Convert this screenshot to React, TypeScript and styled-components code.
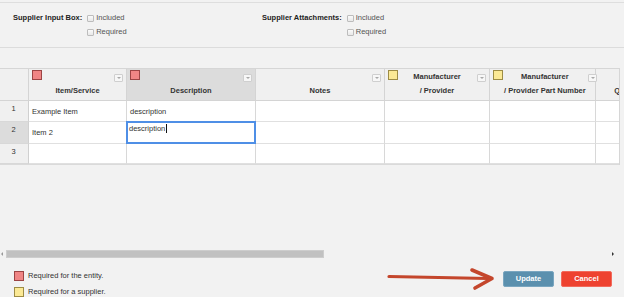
import React from "react";
import styled, { createGlobalStyle } from "styled-components";

const Global = createGlobalStyle`
  html, body { margin: 0; padding: 0; overflow: hidden; }
  body {
    background: #f2f2f2;
    font-family: "Liberation Sans", Arial, sans-serif;
    color: #333;
    width: 624px;
    height: 297px;
  }
`;

const Page = styled.div`
  position: relative;
  display: flex;
  flex-direction: column;
  padding-top: 2px;
  height: 295px;
  font-size: 7.5px;
`;

const Settings = styled.div`
  display: flex;
  border-top: 1px solid #dedede;
  border-bottom: 1px solid #dcdcdc;
  padding: 8px 0 8px 13px;
`;

const Group = styled.div<{ $w?: number }>`
  display: flex;
  width: ${(p) => (p.$w ? `${p.$w}px` : "auto")};
`;

const GroupLabel = styled.div`
  font-weight: bold;
  line-height: 14px;
  color: #222;
  margin-right: 5px;
`;

const Options = styled.div`
  display: flex;
  flex-direction: column;
`;

const Option = styled.label`
  display: flex;
  align-items: center;
  line-height: 14px;
  color: #555;
`;

const Check = styled.span`
  display: inline-block;
  box-sizing: border-box;
  width: 7px;
  height: 7px;
  margin-right: 2px;
  border: 1px solid #bcbcbc;
  border-radius: 1px;
  background: linear-gradient(#fafafa, #e8e8e8);
`;

const GridPanel = styled.div`
  margin-top: 20px;
  height: 192px;
  display: flex;
  flex-direction: column;
`;

const Viewport = styled.div`
  width: 619px;
  overflow: hidden;
  border-right: 1px solid #d6d6d6;
`;

const Grid = styled.div`
  display: grid;
  grid-template-columns: 29px 98px 129px 129px 105px 106px 68px;
  grid-template-rows: 32px 21px 22px 20px;
  width: 664px;
  border-top: 1px solid #d6d6d6;
  border-bottom: 1px solid #dadada;
`;

const Cell = styled.div`
  box-sizing: border-box;
  border-right: 1px solid #d8d8d8;
  border-bottom: 1px solid #e0e0e0;
  background: #fff;
  padding: 0 3px;
  display: flex;
  align-items: center;
  white-space: nowrap;
  overflow: hidden;
  color: #333;
`;

const EditCell = styled(Cell)`
  border: 2px solid #4f8fe6;
  align-items: flex-start;
  padding: 1px 1px 0;
  margin: -1px 0 0 -1px;
  width: calc(100% + 1px);
  height: calc(100% + 1px);
`;

const Caret = styled.span`
  display: inline-block;
  width: 1px;
  height: 9px;
  background: #111;
  margin-left: 1px;
  vertical-align: top;
`;

const RowNum = styled.div<{ $active?: boolean }>`
  box-sizing: border-box;
  border-right: 1px solid #d0d0d0;
  border-bottom: 1px solid #d8d8d8;
  background: ${(p) => (p.$active ? "#dcdcdc" : "#f0f0f0")};
  text-align: center;
  padding-top: 3px;
  padding-right: 1px;
  line-height: 10px;
  color: #333;
`;

const Head = styled.div<{ $active?: boolean }>`
  box-sizing: border-box;
  border-right: 1px solid #d4d4d4;
  border-bottom: 1px solid #d4d4d4;
  background: ${(p) => (p.$active ? "#dcdcdc" : "#f0f0f0")};
  display: grid;
  grid-template-columns: 14px 1fr 14px;
  grid-template-rows: 1fr;
  padding: 1px 0 2px 0;
`;

const Corner = styled.div`
  box-sizing: border-box;
  border-right: 1px solid #d4d4d4;
  border-bottom: 1px solid #d4d4d4;
  background: #f0f0f0;
`;

const Swatch = styled.span<{ $kind: "red" | "yellow" }>`
  display: block;
  box-sizing: border-box;
  width: 10px;
  height: 10px;
  margin-left: 3px;
  background: ${(p) => (p.$kind === "red" ? "#f08585" : "#fbe995")};
  border: 1px solid ${(p) => (p.$kind === "red" ? "#9c4444" : "#9d8c45")};
  align-self: start;
`;

const Spacer = styled.span``;

const HeadLabel = styled.div`
  align-self: end;
  text-align: center;
  font-weight: bold;
  line-height: 14px;
  color: #333;
  white-space: nowrap;
`;

const Filter = styled.span`
  position: relative;
  display: block;
  box-sizing: border-box;
  width: 9px;
  height: 8px;
  margin-top: 4px;
  justify-self: end;
  margin-right: 3px;
  border: 1px solid #cfcfcf;
  border-radius: 1px;
  background: #f7f7f7;
  align-self: start;
  &::after {
    content: "";
    position: absolute;
    left: 2px;
    top: 2px;
    border-left: 2px solid transparent;
    border-right: 2px solid transparent;
    border-top: 2px solid #a8a8a8;
  }
`;

const Scrollbar = styled.div`
  margin-top: auto;
  height: 8px;
  display: flex;
  align-items: center;
  position: relative;
`;

const ScrollArrow = styled.span<{ $dir: "left" | "right" }>`
  width: 0;
  height: 0;
  border-top: 2px solid transparent;
  border-bottom: 2px solid transparent;
  ${(p) =>
    p.$dir === "left"
      ? "border-right: 2px solid #999; margin-left: 1px;"
      : "border-left: 2px solid #333; margin-left: auto; margin-right: 10px;"}
`;

const Thumb = styled.span`
  box-sizing: border-box;
  width: 318px;
  height: 8px;
  margin-left: 3px;
  background: #c1c1c1;
  border: 1px solid #cdcdcd;
`;

const Footer = styled.div`
  display: flex;
  justify-content: space-between;
  align-items: flex-start;
  padding: 13px 12px 0 14px;
`;

const Legend = styled.div`
  display: flex;
  flex-direction: column;
  gap: 6px;
`;

const LegendItem = styled.div`
  display: flex;
  align-items: center;
  gap: 4px;
  line-height: 10px;
  color: #333;
`;

const LegendSwatch = styled(Swatch)`
  margin-left: 0;
`;

const Buttons = styled.div`
  display: flex;
  gap: 7px;
`;

const Button = styled.button<{ $variant: "primary" | "danger" }>`
  box-sizing: border-box;
  width: 51px;
  height: 16px;
  padding: 0;
  border-radius: 2px;
  border: 1px solid ${(p) => (p.$variant === "primary" ? "#7aa6c0" : "#f26a5c")};
  background: ${(p) => (p.$variant === "primary" ? "#5b90ae" : "#ee4230")};
  color: #fff;
  font-family: "Liberation Sans", Arial, sans-serif;
  font-size: 7.5px;
  font-weight: bold;
  line-height: 14px;
`;

const ArrowSvg = styled.svg`
  position: absolute;
  left: 380px;
  top: 264px;
`;

type Col = { label: React.ReactNode; swatch?: "red" | "yellow"; active?: boolean };

const cols: Col[] = [
  { label: "Item/Service", swatch: "red" },
  { label: "Description", swatch: "red", active: true },
  { label: "Notes" },
  { label: <>Manufacturer<br />/ Provider</>, swatch: "yellow" },
  { label: <>Manufacturer<br />/ Provider Part Number</>, swatch: "yellow" },
  { label: "Quantity" },
];

export default function App() {
  return (
    <>
      <Global />
      <Page>
        <Settings>
          <Group $w={249}>
            <GroupLabel>Supplier Input Box:</GroupLabel>
            <Options>
              <Option><Check />Included</Option>
              <Option><Check />Required</Option>
            </Options>
          </Group>
          <Group>
            <GroupLabel>Supplier Attachments:</GroupLabel>
            <Options>
              <Option><Check />Included</Option>
              <Option><Check />Required</Option>
            </Options>
          </Group>
        </Settings>

        <GridPanel>
          <Viewport>
            <Grid>
              <Corner />
              {cols.map((c, i) => (
                <Head key={i} $active={c.active}>
                  {c.swatch ? <Swatch $kind={c.swatch} /> : <Spacer />}
                  <HeadLabel>{c.label}</HeadLabel>
                  {i < 5 ? <Filter /> : <Spacer />}
                </Head>
              ))}

              <RowNum>1</RowNum>
              <Cell>Example Item</Cell>
              <Cell>description</Cell>
              <Cell />
              <Cell />
              <Cell />
              <Cell />

              <RowNum $active>2</RowNum>
              <Cell>Item 2</Cell>
              <EditCell>
                description<Caret />
              </EditCell>
              <Cell />
              <Cell />
              <Cell />
              <Cell />

              <RowNum>3</RowNum>
              <Cell />
              <Cell />
              <Cell />
              <Cell />
              <Cell />
              <Cell />
            </Grid>
          </Viewport>
          <Scrollbar>
            <ScrollArrow $dir="left" />
            <Thumb />
            <ScrollArrow $dir="right" />
          </Scrollbar>
        </GridPanel>

        <Footer>
          <Legend>
            <LegendItem><LegendSwatch $kind="red" />Required for the entity.</LegendItem>
            <LegendItem><LegendSwatch $kind="yellow" />Required for a supplier.</LegendItem>
          </Legend>
          <Buttons>
            <Button $variant="primary">Update</Button>
            <Button $variant="danger">Cancel</Button>
          </Buttons>
        </Footer>

        <ArrowSvg width="120" height="30" viewBox="0 0 120 30">
          <path d="M9 12.5 L108 14.5" stroke="#c4462c" strokeWidth="3.2" strokeLinecap="round" fill="none" />
          <path d="M92 6 L112 14.5 L95 24" stroke="#c4462c" strokeWidth="3.6" strokeLinecap="round" strokeLinejoin="round" fill="none" />
        </ArrowSvg>
      </Page>
    </>
  );
}
